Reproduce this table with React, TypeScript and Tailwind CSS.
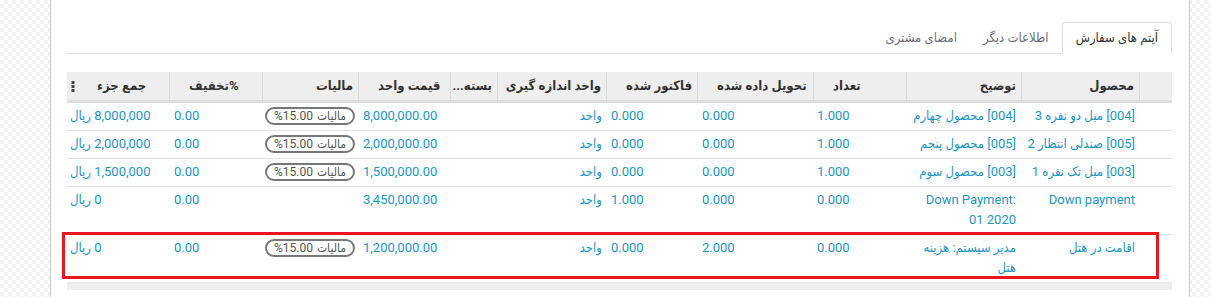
import React from 'react';

type Row = {
  product: string;
  desc: string;
  descLtr?: boolean;
  qty: string;
  delivered: string;
  invoiced: string;
  tax: boolean;
  price: string;
  disc: string;
  total: string;
};

const rows: Row[] = [
  { product: '[004] مبل دو نفره 3', desc: '[004] محصول چهارم', qty: '1.000', delivered: '0.000', invoiced: '0.000', tax: true, price: '8,000,000.00', disc: '0.00', total: '8,000,000 ریال' },
  { product: '[005] صندلی انتظار 2', desc: '[005] محصول پنجم', qty: '1.000', delivered: '0.000', invoiced: '0.000', tax: true, price: '2,000,000.00', disc: '0.00', total: '2,000,000 ریال' },
  { product: '[003] مبل تک نفره 1', desc: '[003] محصول سوم', qty: '1.000', delivered: '0.000', invoiced: '0.000', tax: true, price: '1,500,000.00', disc: '0.00', total: '1,500,000 ریال' },
  { product: 'Down payment', desc: 'Down Payment: 01 2020', descLtr: true, qty: '0.000', delivered: '0.000', invoiced: '1.000', tax: false, price: '3,450,000.00', disc: '0.00', total: '0 ریال' },
  { product: 'اقامت در هتل', desc: 'مدیر سیستم: هزینه هتل', qty: '0.000', delivered: '2.000', invoiced: '0.000', tax: true, price: '1,200,000.00', disc: '0.00', total: '0 ریال' },
];

// widths right-to-left, matching the header separators
const widths = ['w-[33px]', 'w-[118px]', 'w-[115px]', 'w-[93px]', 'w-[116px]', 'w-[91px]', 'w-[109px]', 'w-[47px]', 'w-[92px]', 'w-[96px]', 'w-[93px]', 'w-[102px]'];

const thBase = 'h-[31px] border-b-[3px] border-b-[#dedede] bg-[#eeeeee] font-bold text-[#333] whitespace-nowrap overflow-hidden';
const thText = `${thBase} border-l border-l-[#dcdcdc] pr-[5px] text-right`;
const thNum = `${thBase} border-l border-l-[#dcdcdc] pl-[19px] text-left`;

function TaxBadge() {
  // visual order fixed: "%15.00" on the left, the word on the right
  return (
    <span dir="ltr" className="inline-flex h-[18px] items-center gap-[4px] whitespace-nowrap rounded-full border-2 border-[#777] px-[7px] text-[12px] leading-none text-[#555]">
      <span>%15.00</span>
      <span dir="rtl">مالیات</span>
    </span>
  );
}

function OptionalColumnsIcon() {
  return (
    <svg width="4" height="11" viewBox="0 0 4 11" className="text-[#444]">
      <rect x="0.5" y="0" width="3" height="3" fill="currentColor" />
      <rect x="0.5" y="4" width="3" height="3" fill="currentColor" />
      <rect x="0.5" y="8" width="3" height="3" fill="currentColor" />
    </svg>
  );
}

export default function App() {
  return (
    <div className="relative flex h-[297px] w-[1211px] overflow-hidden bg-[image:repeating-conic-gradient(#f2f2f2_0_25%,#fcfcfc_0_50%)] bg-[size:8px_8px] font-[Roboto,'DejaVu_Sans_Condensed','DejaVu_Sans',sans-serif] text-[13px]">
      <div className="w-[50px] shrink-0" />
      <div className="w-[1140px] shrink-0 border-x border-[#c9c9c9] bg-white pl-[16px] pr-[17px] pt-[22px]">
        {/* tabs */}
        <div dir="rtl" className="flex border-b border-[#dee2e6]">
          <div className="-mb-px h-[32px] rounded-t-[4px] border border-[#dee2e6] border-b-white bg-white px-[13px] leading-[30px] text-[#333]">
            آیتم های سفارش
          </div>
          <div className="h-[31px] px-[13px] leading-[31px] text-[#6f6f78]">اطلاعات دیگر</div>
          <div className="h-[31px] px-[13px] leading-[31px] text-[#6f6f78]">امضای مشتری</div>
        </div>

        {/* order lines */}
        <table dir="rtl" className="mt-[18px] w-full table-fixed border-separate border-spacing-0">
          <colgroup>
            {widths.map((w, i) => (
              <col key={i} className={w} />
            ))}
          </colgroup>
          <thead>
            <tr>
              <th className={thText}></th>
              <th className={thText}>محصول</th>
              <th className={thText}>توضیح</th>
              <th className={thNum}>تعداد</th>
              <th className={thNum}>تحویل داده شده</th>
              <th className={thNum}>فاکتور شده</th>
              <th className={thText}>واحد اندازه گیری</th>
              <th className={thText}>بسته...</th>
              <th className={thNum}>قیمت واحد</th>
              <th className={thText}>مالیات</th>
              <th className={thNum}>
                <span dir="ltr" className="inline-flex">
                  <span dir="rtl">تخفیف</span>
                  <span>%</span>
                </span>
              </th>
              <th className={`${thBase} relative pl-[30px] text-left`}>
                جمع جزء
                <span className="absolute left-[4px] top-[9px] flex">
                  <OptionalColumnsIcon />
                </span>
              </th>
            </tr>
          </thead>
          <tbody className="text-[#1e96c4]">
            {rows.map((r, i) => {
              const last = i === rows.length - 1;
              const td = `pt-[3px] pb-[4px] align-top leading-[20px] ${last ? '' : 'border-b border-[#dee2e6]'}`;
              return (
                <tr key={i}>
                  <td className={td}></td>
                  <td className={`${td} whitespace-nowrap pr-[4px] text-right`}>{r.product}</td>
                  <td className={`${td} pl-[4px] pr-[5px] text-right`}>
                    {r.descLtr ? <span dir="ltr">{r.desc}</span> : r.desc}
                  </td>
                  <td className={`${td} pl-[4px] text-left`}>{r.qty}</td>
                  <td className={`${td} pl-[5px] text-left`}>{r.delivered}</td>
                  <td className={`${td} pl-[5px] text-left`}>{r.invoiced}</td>
                  <td className={`${td} pr-[4px] text-right`}>واحد</td>
                  <td className={td}></td>
                  <td className={`${td} pl-[5px] text-left`}>{r.price}</td>
                  <td className={`${td} pr-[3px] text-right`}>{r.tax && <TaxBadge />}</td>
                  <td className={`${td} pl-[5px] text-left`}>{r.disc}</td>
                  <td className={`${td} pl-[3px] text-left whitespace-nowrap`}>{r.total}</td>
                </tr>
              );
            })}
          </tbody>
        </table>
        <div className="h-[8px] bg-[#eeeeee]" />
      </div>

      {/* highlight around the hotel line */}
      <div className="pointer-events-none absolute left-[62px] top-[232px] h-[47px] w-[1097px] border-[3px] border-[#e8161f]" />
    </div>
  );
}
